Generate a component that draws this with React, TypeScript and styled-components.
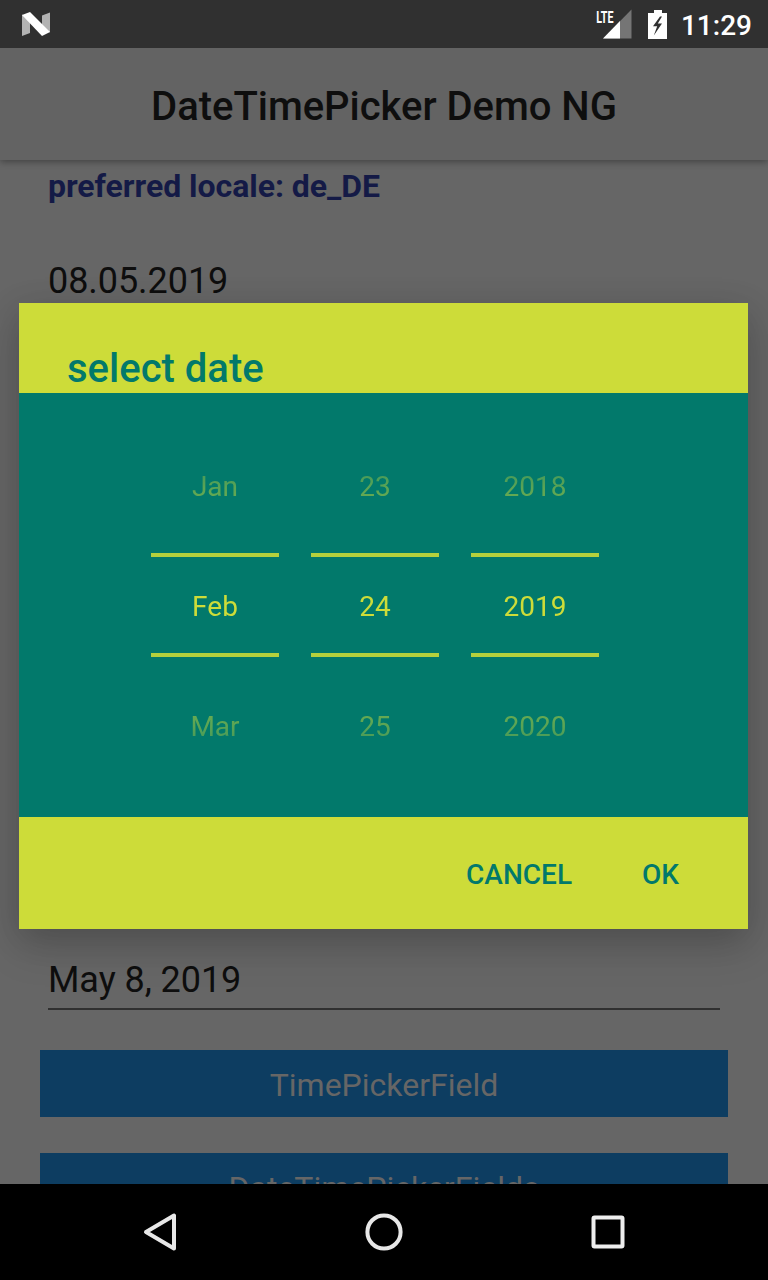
import React from "react";
import styled, { createGlobalStyle } from "styled-components";

const LIME = "#cddc39";
const TEAL = "#02796b";

const GlobalStyle = createGlobalStyle`
  * { box-sizing: border-box; }
  body { margin: 0; background: #000; font-family: Roboto, "Liberation Sans", sans-serif; }
  button { font: inherit; border: 0; padding: 0; background: none; }
`;

const Screen = styled.div`
  position: relative;
  width: 768px;
  height: 1280px;
  display: flex;
  flex-direction: column;
  overflow: hidden;
  background: #666;
  color: #0e0e0e;
`;

const StatusBar = styled.header`
  height: 48px;
  flex: none;
  z-index: 2;
  display: flex;
  align-items: center;
  padding: 0 16px 0 20px;
  background: #303030;
  color: #fff;
`;

const StatusIcons = styled.div`
  margin-left: auto;
  display: flex;
  align-items: center;
`;

const Clock = styled.time`
  margin-left: 13px;
  font-size: 28px;
  font-weight: 500;
  line-height: 48px;
  padding-top: 3px;
`;

const AppBar = styled.div`
  height: 112px;
  flex: none;
  z-index: 1;
  display: flex;
  align-items: center;
  justify-content: center;
  padding-top: 6px;
  background: #636363;
  box-shadow: 0 2px 7px rgba(0, 0, 0, 0.35);
`;

const AppTitle = styled.h1`
  margin: 0;
  font-size: 40px;
  font-weight: 500;
  line-height: 48px;
  letter-spacing: -0.03px;
`;

const Content = styled.main`
  flex: 1;
  min-height: 0;
  overflow: hidden;
  display: flex;
  flex-direction: column;
  padding: 7px 40px 0;
`;

const Locale = styled.h2`
  margin: 0 8px;
  font-size: 32px;
  font-weight: 700;
  line-height: 38px;
  letter-spacing: -0.04px;
  color: #141a46;
`;

const DateField = styled.div<{ $gap: number; $inset?: number }>`
  height: 62px;
  flex: none;
  margin: ${(p) => p.$gap}px 8px 0;
  padding-top: ${(p) => p.$inset ?? 10}px;
  border-bottom: 2px solid #303030;
  font-size: 36px;
  line-height: 42px;
  letter-spacing: -0.06px;
`;

const PageButton = styled.button<{ $gap: number }>`
  height: 67px;
  flex: none;
  margin-top: ${(p) => p.$gap}px;
  padding-top: 3px;
  background: #0d3d61;
  color: #666;
  font-size: 32px;
  line-height: 64px;
`;

const NavBar = styled.nav`
  height: 96px;
  flex: none;
  z-index: 1;
  display: flex;
  align-items: center;
  justify-content: center;
  gap: 176px;
  background: #000;
`;

const Dialog = styled.section`
  position: absolute;
  z-index: 2;
  top: 303px;
  left: 19px;
  width: 729px;
  display: flex;
  flex-direction: column;
  background: ${LIME};
  color: ${TEAL};
  box-shadow: 0 16px 40px rgba(0, 0, 0, 0.17), 0 8px 32px rgba(0, 0, 0, 0.1);
`;

const DialogTitle = styled.h2`
  height: 90px;
  margin: 0;
  padding: 42px 48px 0;
  font-size: 40px;
  font-weight: 500;
  line-height: 47px;
`;

const Pickers = styled.div`
  height: 424px;
  display: flex;
  justify-content: center;
  gap: 32px;
  padding: 32px 17px 32px 0;
  background: ${TEAL};
`;

const Wheel = styled.div`
  width: 128px;
  display: grid;
`;

const Values = styled.div`
  grid-area: 1 / 1;
  display: flex;
  flex-direction: column;
  color: ${LIME};
  mask-image: linear-gradient(transparent, rgba(0, 0, 0, 0.43) 62px, #000 166px, #000 194px, rgba(0, 0, 0, 0.43) 302px, transparent);
`;

const Value = styled.span`
  height: 120px;
  padding-top: 2px;
  text-align: center;
  font-size: 28px;
  line-height: 120px;
`;

const SelectionFrame = styled.div`
  grid-area: 1 / 1;
  align-self: start;
  height: 104px;
  margin-top: 128px;
  border: solid #b4d03d;
  border-width: 4px 0;
`;

const Actions = styled.footer`
  height: 112px;
  display: flex;
  align-items: center;
  justify-content: flex-end;
  gap: 70px;
  padding: 3px 69px 0 0;
`;

const ActionButton = styled.button`
  color: ${TEAL};
  font-size: 28px;
  font-weight: 500;
  line-height: 40px;
`;

const NLogo = () => (
  <svg width="32" height="28" viewBox="0 0 32 28">
    <path d="M2 4.5 10 9v14L2 26z M22 5.5 30 2.5v20L22 17z" fill="#b3b3b3" />
    <path d="M2 5 10 2 30 22 22 26z" fill="#fff" />
  </svg>
);

const Signal = () => (
  <svg width="38" height="32" viewBox="0 0 38 32">
    <path d="M36.5 1.5V30.5H8z" fill="#757575" />
    <path d="M25 13v17.5H8z" fill="#fff" />
    <text
      transform="translate(1.2 14.5) scale(.63 1)"
      fill="#fff"
      fontFamily="Roboto, sans-serif"
      fontSize="17"
      fontWeight="700"
    >
      LTE
    </text>
  </svg>
);

const Battery = () => (
  <svg width="20" height="30" viewBox="0 0 20 30">
    <path d="M6 1h8v3h5v26H0V4h6z" fill="#fff" />
    <path d="M12 7.5 5 17.3h4.2L5.8 26.5 14 14.5H9.8L14 7.5z" fill="#303030" />
  </svg>
);

const BatterySlot = styled.span`
  display: flex;
  margin-left: 15px;
`;

const BackIcon = () => (
  <svg width="48" height="48" viewBox="0 0 48 48" fill="none" stroke="#e8e8e8" strokeWidth="4" strokeLinejoin="round">
    <path d="M38 7.5v33L10 24z" />
  </svg>
);

const HomeIcon = () => (
  <svg width="48" height="48" viewBox="0 0 48 48" fill="none" stroke="#e8e8e8" strokeWidth="4">
    <circle cx="24" cy="24" r="16.6" />
  </svg>
);

const RecentsIcon = () => (
  <svg width="48" height="48" viewBox="0 0 48 48" fill="none" stroke="#eee" strokeWidth="4">
    <rect x="9.5" y="9.5" width="29" height="29" rx="1" />
  </svg>
);

const wheels = [
  ["Jan", "Feb", "Mar"],
  ["23", "24", "25"],
  ["2018", "2019", "2020"],
];

export default function App() {
  return (
    <Screen>
      <GlobalStyle />
      <StatusBar>
        <NLogo />
        <StatusIcons>
          <Signal />
          <BatterySlot>
            <Battery />
          </BatterySlot>
          <Clock>11:29</Clock>
        </StatusIcons>
      </StatusBar>
      <AppBar>
        <AppTitle>DateTimePicker Demo NG</AppTitle>
      </AppBar>
      <Content>
        <Locale>preferred locale: de_DE</Locale>
        <DateField $gap={45}>08.05.2019</DateField>
        <DateField $gap={636} $inset={11}>May 8, 2019</DateField>
        <PageButton $gap={40}>TimePickerField</PageButton>
        <PageButton $gap={36}>DateTimePickerFields</PageButton>
      </Content>
      <NavBar>
        <BackIcon />
        <HomeIcon />
        <RecentsIcon />
      </NavBar>
      <Dialog role="dialog">
        <DialogTitle>select date</DialogTitle>
        <Pickers>
          {wheels.map((values) => (
            <Wheel key={values[0]}>
              <Values>
                {values.map((value) => (
                  <Value key={value}>{value}</Value>
                ))}
              </Values>
              <SelectionFrame />
            </Wheel>
          ))}
        </Pickers>
        <Actions>
          <ActionButton>CANCEL</ActionButton>
          <ActionButton>OK</ActionButton>
        </Actions>
      </Dialog>
    </Screen>
  );
}
